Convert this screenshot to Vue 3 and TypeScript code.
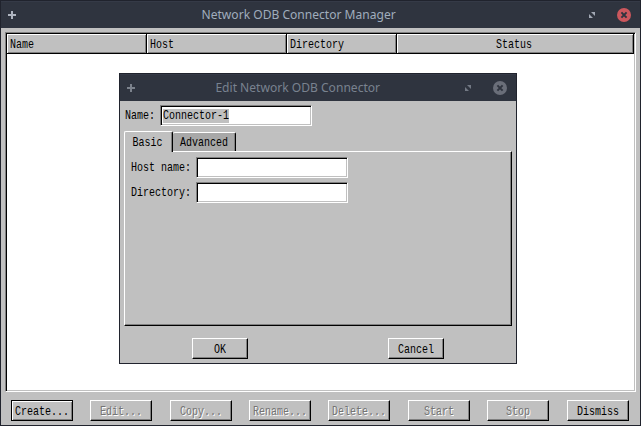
<script setup lang="ts">
import { ref } from 'vue'

interface Action {
  label: string
  enabled: boolean
  isDefault?: boolean
}

const columns: string[] = ['Name', 'Host', 'Directory', 'Status']
const actions: Action[] = [
  { label: 'Create...', enabled: true, isDefault: true },
  { label: 'Edit...', enabled: false },
  { label: 'Copy...', enabled: false },
  { label: 'Rename...', enabled: false },
  { label: 'Delete...', enabled: false },
  { label: 'Start', enabled: false },
  { label: 'Stop', enabled: false },
  { label: 'Dismiss', enabled: true },
]
const connectorName = ref('Connector-1')
</script>

<template>
  <main class="window">
    <header class="titlebar">
      <svg class="plus" width="8" height="8" viewBox="0 0 8 8"><path d="M3 0h2v3h3v2H5v3H3V5H0V3h3z" /></svg>
      <h1 class="title"><span class="title-text">Network ODB Connector Manager</span></h1>
      <svg class="resize" width="6" height="6" viewBox="0 0 6 6"><path d="M2 0h4v4zM0 2v4h4z" /></svg>
      <svg class="close" width="14" height="14" viewBox="0 0 14 14">
        <circle cx="7" cy="7" r="7" /><path d="M4.4 4.4l5.2 5.2M9.6 4.4l-5.2 5.2" />
      </svg>
    </header>
    <div class="body">
      <section class="table">
        <div class="head">
          <div v-for="c in columns" :key="c" class="cell"><span class="t">{{ c }}</span></div>
        </div>
      </section>
      <footer class="actions">
        <button
          v-for="a in actions"
          :key="a.label"
          class="btn"
          :class="{ default: a.isDefault, off: !a.enabled }"
          :disabled="!a.enabled"
        ><span class="t">{{ a.label }}</span></button>
      </footer>
    </div>

    <section class="dialog">
      <header class="titlebar">
        <svg class="plus" width="8" height="8" viewBox="0 0 8 8"><path d="M3 0h2v3h3v2H5v3H3V5H0V3h3z" /></svg>
        <h2 class="title"><span class="title-text">Edit Network ODB Connector</span></h2>
        <svg class="resize" width="6" height="6" viewBox="0 0 6 6"><path d="M2 0h4v4zM0 2v4h4z" /></svg>
        <svg class="close" width="14" height="14" viewBox="0 0 14 14">
          <circle cx="7" cy="7" r="7" /><path d="M4.4 4.4l5.2 5.2M9.6 4.4l-5.2 5.2" />
        </svg>
      </header>
      <div class="content">
        <div class="row name-row">
          <span class="t">Name:</span>
          <div class="field"><span class="selected"><span class="t">{{ connectorName }}</span></span></div>
        </div>
        <div class="tabs">
          <div class="tab active"><span class="t">Basic</span></div>
          <div class="tab"><span class="t">Advanced</span></div>
        </div>
        <div class="panel">
          <div class="row"><span class="t">Host name:</span><div class="field"></div></div>
          <div class="row"><span class="t">Directory:</span><div class="field"></div></div>
        </div>
        <div class="dialog-actions">
          <button class="btn"><span class="t">OK</span></button>
          <button class="btn"><span class="t">Cancel</span></button>
        </div>
      </div>
    </section>
  </main>
</template>

<style>
body { overflow: hidden; background: #fff; }
</style>

<style scoped>
* { box-sizing: border-box; }
.window {
  position: relative;
  width: 641px;
  height: 426px;
  display: flex;
  flex-direction: column;
  border: 1px solid #20232d;
  background: #c0c0c0;
  color: #000;
  font-family: "Liberation Mono", monospace;
  font-size: 10px;
  line-height: 13px;
}
.t {
  display: inline-block;
  height: 13px;
  line-height: 13px;
  white-space: pre;
  transform: scaleY(1.34);
}
.titlebar {
  flex: none;
  display: flex;
  align-items: center;
  height: 27px;
  padding: 0 9px 0 7px;
  background: #2f343f;
  border-top: 1px solid #353a47;
  color: #a0adbd;
}
.plus { fill: #afb5c0; }
.title {
  flex: 1;
  margin: 0;
  padding-right: 8px;
  text-align: center;
  font: 400 13px/20px "Noto Sans", sans-serif;
  white-space: nowrap;
}
.title-text {
  display: inline-block;
  transform: translateY(-1px) scaleX(0.928);
}
.dialog .title { padding-right: 5px; }
.resize { fill: #a2a8b4; margin-right: 22px; }
.close circle { fill: #cc575d; }
.close path { stroke: #2f343f; stroke-width: 2; }
.body {
  flex: 1;
  display: flex;
  flex-direction: column;
  padding: 4px;
}
.table {
  height: 360px;
  width: 631px;
  border: 1px solid;
  border-color: #808080 #fff #fff #808080;
  background: #fff;
  box-shadow: inset 1px 1px #000, inset -1px -1px #c0c0c0;
}
.head {
  display: grid;
  grid-template-columns: 140px 140px 110px 237px;
  width: 628px;
  height: 21px;
  border-top: 1px solid #000;
  border-left: 1px solid #000;
}
.cell {
  display: flex;
  align-items: center;
  padding: 1px 0 0 3px;
  border-right: 1px solid #000;
  border-bottom: 1px solid #000;
  background: #c0c0c0;
  box-shadow: inset 1px 1px #fff, inset -1px -1px #808080;
}
.cell:last-child { justify-content: center; padding: 1px 2px 0 0; }
.actions {
  display: grid;
  grid-template-columns: 79px 80px 79px 79px 80px 79px 80px 62px;
  margin: 8px 0 0 6px;
}
.btn {
  display: flex;
  align-items: center;
  justify-content: center;
  width: 62px;
  height: 21px;
  padding: 1px 0 0;
  border: 1px solid;
  border-color: #fff #000 #000 #fff;
  border-radius: 0;
  background: #c0c0c0;
  color: #000;
  font: inherit;
  box-shadow: inset -1px -1px #808080;
}
.btn.default { border-color: #000; box-shadow: inset 1px 1px #fff, inset -1px -1px #808080; }
.btn.off { color: #747474; text-shadow: 1px 1px #fff; }
.dialog {
  position: absolute;
  left: 118px;
  top: 72px;
  width: 398px;
  height: 291px;
  display: flex;
  flex-direction: column;
  border: 1px solid #20232d;
  background: #c0c0c0;
}
.dialog .titlebar { color: #79828f; }
.dialog .plus { fill: #7c828c; }
.dialog .resize { fill: #737984; }
.dialog .close circle { fill: #6a6e79; }
.content { flex: 1; padding: 4px; display: flex; flex-direction: column; }
.row { display: flex; align-items: center; gap: 5px; height: 21px; }
.name-row { padding-left: 1px; }
.field {
  width: 152px;
  height: 21px;
  display: flex;
  align-items: center;
  padding: 0 0 0 2px;
  border: 1px solid;
  border-color: #808080 #fff #fff #808080;
  background: #fff;
  box-shadow: inset 1px 1px #000, inset -1px -1px #c0c0c0;
}
.selected { height: 14px; background: #c0c0c0; }
.tabs { display: flex; align-items: flex-end; height: 25px; }
.tab {
  width: 63px;
  height: 19px;
  padding-top: 1px;
  display: flex;
  align-items: center;
  justify-content: center;
  border-top: 1px solid #fff;
  border-right: 1px solid #000;
  border-radius: 2px 2px 0 0;
  background: #a8a8a8;
  box-shadow: inset -1px 0 #808080;
}
.tab.active {
  position: relative;
  width: 49px;
  height: 21px;
  margin-bottom: -1px;
  padding: 0 2px 0 0;
  border-left: 1px solid #fff;
  background: #c0c0c0;
}
.panel {
  height: 175px;
  display: flex;
  flex-direction: column;
  gap: 4px;
  padding: 5px 6px;
  border: 1px solid;
  border-color: #fff #000 #000 #fff;
  box-shadow: inset -1px -1px #808080;
}
.dialog-actions { display: flex; gap: 140px; padding: 12px 0 0 68px; }
.dialog-actions .btn { width: 56px; }
</style>
